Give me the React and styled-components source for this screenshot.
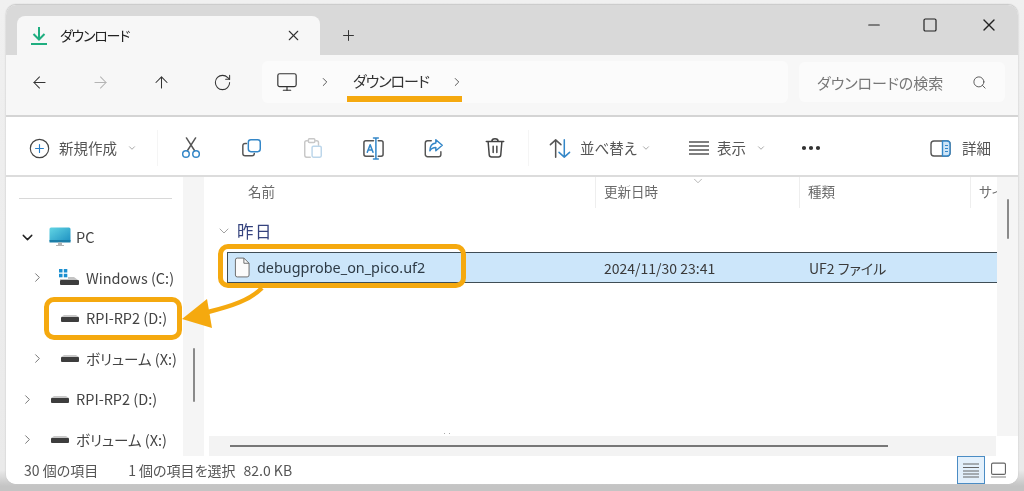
import React from "react";
import styled, { createGlobalStyle } from "styled-components";
import { ArrowLeft, ArrowRight, ArrowUp, RotateCw, Monitor, ChevronRight, ChevronDown, Search, X, Plus, Minus, Square, Ellipsis } from "lucide-react";

const Global = createGlobalStyle`
  html, body { margin: 0; padding: 0; background: #ededed; }
  body { width: 1024px; height: 491px; overflow: hidden; font-family: "Noto Sans CJK JP", "Noto Sans", sans-serif; font-feature-settings: "palt"; }
`;

const Page = styled.div`
  position: relative;
  width: 1024px;
  height: 491px;
  padding: 5px 6px 7px;
  box-sizing: border-box;
  background: linear-gradient(#f0f0f0 0, #eaeaea 470px, #c4c4c4 486px);
  filter: blur(0.4px);
`;
const Win = styled.div`
  height: 479px;
  display: flex;
  flex-direction: column;
  background: #fff;
  border-radius: 10px;
  overflow: hidden;
  box-shadow: 0 -1px 1px #c9c9c9, 0 0 2px #c4c4c4;
`;
const TitleBar = styled.div`
  height: 50px;
  flex: none;
  display: flex;
  align-items: flex-end;
  background: #d9d9d9;
  padding-left: 11px;
  box-sizing: border-box;
`;
const Tab = styled.div`
  width: 303px;
  height: 39px;
  box-sizing: border-box;
  background: #f7f7f7;
  border-radius: 8px 8px 0 0;
  display: flex;
  align-items: center;
  padding: 0 18px 0 13px;
  color: #222;
  font-size: 14px;
  gap: 12px;
`;
const TabLabel = styled.span`
  flex: 1;
  margin-top: -2px;
  letter-spacing: -1.2px;
`;
const NewTab = styled.div`
  margin: 0 0 5px 20px;
  height: 30px;
  display: flex;
  align-items: center;
  color: #333;
`;
const WinButtons = styled.div`
  margin-left: auto;
  align-self: flex-start;
  display: flex;
  align-items: center;
  height: 39px;
  gap: 39px;
  padding-right: 19px;
  color: #222;
`;
const CloseGlyph = styled(X)`
  margin-left: 2px;
`;
const NavBar = styled.div`
  height: 62px;
  flex: none;
  box-sizing: border-box;
  display: flex;
  align-items: center;
  background: #f7f7f7;
  border-bottom: 2px solid #d4d4d4;
  padding: 0 13px 6px 24px;
`;
const NavBtn = styled.div`
  width: 61px;
  flex: none;
  display: flex;
  color: ${(p) => (p.$off ? "#b4b4b4" : "#333")};
`;
const Crumbs = styled.div`
  width: 526px;
  height: 42px;
  flex: none;
  margin-left: -12px;
  box-sizing: border-box;
  background: #fbfbfb;
  border-radius: 6px;
  display: flex;
  align-items: center;
  padding-left: 14px;
  color: #333;
  font-size: 15px;
`;
const CrumbText = styled.span`
  margin: -3px 0 0 21px;
  letter-spacing: -1px;
  color: #333;
`;
const CrumbSep = styled.span`
  display: flex;
  margin-left: ${(p) => p.$ml}px;
  color: #444;
`;
const SearchBox = styled.div`
  width: 206px;
  height: 40px;
  flex: none;
  margin-left: 11px;
  box-sizing: border-box;
  background: #fbfbfb;
  border-radius: 6px;
  display: flex;
  align-items: center;
  justify-content: space-between;
  padding: 0 18px;
  color: #777;
  font-size: 15px;
`;
const ToolBar = styled.div`
  height: 60px;
  flex: none;
  box-sizing: border-box;
  display: flex;
  align-items: center;
  background: #fff;
  border-bottom: 2px solid #dcdcdc;
  padding: 4px 0 0 23px;
  color: #444;
  font-size: 14.5px;
`;
const ToolText = styled.span`
  margin-left: ${(p) => p.$ml || 0}px;
  margin-top: -1px;
  color: #555;
  white-space: nowrap;
`;
const ToolCaret = styled.span`
  display: flex;
  margin-left: ${(p) => p.$ml}px;
  color: #999;
`;
const ToolIcon = styled.span`
  display: flex;
  flex: none;
  margin-left: ${(p) => p.$ml || 0}px;
`;
const ToolSep = styled.span`
  width: 1px;
  height: 36px;
  background: #f5f5f5;
  margin-left: ${(p) => p.$ml}px;
  flex: none;
`;
const Body = styled.div`
  flex: 1;
  min-height: 0;
  display: flex;
`;
const Side = styled.div`
  width: 177px;
  flex: none;
  background: #fff;
  box-sizing: border-box;
  padding-top: 21px;
  overflow: hidden;
`;
const SideRule = styled.div`
  height: 1px;
  margin: 0 11px 0 13px;
  background: #d8d8d8;
`;
const Tree = styled.div`
  margin-top: 18px;
  display: flex;
  flex-direction: column;
`;
const TreeRow = styled.div`
  height: 40.5px;
  display: flex;
  align-items: center;
  padding-left: ${(p) => p.$indent}px;
  color: #444;
  font-size: 14.5px;
  white-space: nowrap;
`;
const TreeTwist = styled.span`
  width: ${(p) => p.$w}px;
  flex: none;
  display: flex;
  color: ${(p) => (p.$dark ? "#222" : "#777")};
`;
const TreeIcon = styled.span`
  width: ${(p) => p.$w}px;
  flex: none;
  display: flex;
`;
const TreeLabel = styled.span`
  margin-top: -1px;
`;
const SideScroll = styled.div`
  width: 21px;
  flex: none;
  background: #f5f5f5;
  display: flex;
  justify-content: center;
`;
const SideThumb = styled.div`
  width: 2px;
  height: 54px;
  margin-top: 171px;
  background: #8a8a8a;
  border-radius: 1px;
`;
const Main = styled.div`
  flex: 1;
  min-width: 0;
  display: flex;
  flex-direction: column;
  background: #fff;
`;
const Upper = styled.div`
  flex: 1;
  min-height: 0;
  display: flex;
`;
const List = styled.div`
  flex: 1;
  min-width: 0;
  overflow: hidden;
  display: flex;
  flex-direction: column;
`;
const Header = styled.div`
  height: 31px;
  flex: none;
  display: grid;
  grid-template-columns: 392px 204px 171px 1fr;
  color: #6a6a6a;
  font-size: 13.5px;
  position: relative;
`;
const HeadCell = styled.div`
  padding-left: ${(p) => p.$pl}px;
  display: flex;
  align-items: center;
  padding-bottom: 3px;
  border-right: ${(p) => (p.$rule ? "1px solid #eee" : "none")};
  white-space: nowrap;
  overflow: hidden;
`;
const SortCaret = styled.span`
  position: absolute;
  left: 487px;
  top: -3px;
  display: flex;
  color: #999;
`;
const Group = styled.div`
  height: 44px;
  flex: none;
  display: flex;
  align-items: center;
  padding: 2px 0 0 12px;
  gap: 5px;
  color: #35437e;
  font-size: 16.5px;
  letter-spacing: 1.5px;
  box-sizing: border-box;
`;
const GroupArrow = styled.span`
  display: flex;
  color: #8a8a8a;
`;
const FileRow = styled.div`
  height: 31px;
  flex: none;
  margin-left: 23px;
  box-sizing: border-box;
  background: #cce6fa;
  border-top: 1px solid #3f4d55;
  border-bottom: 1px solid #3f4d55;
  border-left: 1px solid #3f4d55;
  display: grid;
  grid-template-columns: 376px 205px 1fr;
  align-items: center;
  color: #333;
  font-size: 14px;
`;
const FileName = styled.div`
  display: flex;
  align-items: center;
  gap: 7px;
  padding-left: 6px;
  font-size: 14.4px;
  color: #2d3a45;
  font-family: "Noto Sans", sans-serif;
`;
const Cell = styled.div`
  white-space: nowrap;
  color: #3a3a3a;
`;
const VScroll = styled.div`
  width: 21px;
  flex: none;
  background: #f5f5f5;
  display: flex;
  justify-content: center;
`;
const VThumb = styled.div`
  width: 2px;
  height: 40px;
  margin-top: 22px;
  background: #8a8a8a;
  border-radius: 1px;
`;
const HScroll = styled.div`
  height: 20px;
  flex: none;
  margin: 0 22px 0 5px;
  background: #f3f3f3;
  display: flex;
  align-items: center;
  padding-left: 21px;
  position: relative;
`;
const HThumb = styled.div`
  width: 658px;
  height: 2px;
  background: #777;
`;
const HDots = styled.span`
  position: absolute;
  left: 235px;
  top: -3px;
  width: 4px;
  height: 1px;
  border-left: 1px solid #aaa;
  border-right: 1px solid #aaa;
`;
const Status = styled.div`
  height: 28px;
  flex: none;
  display: flex;
  align-items: center;
  background: #fff;
  padding: 0 12px 0 18px;
  color: #555;
  font-size: 14px;
  box-sizing: border-box;
`;
const StatusText = styled.span`
  margin-left: ${(p) => p.$ml || 0}px;
  white-space: nowrap;
`;
const ViewButtons = styled.div`
  margin-left: auto;
  display: flex;
  align-items: center;
  gap: 6px;
`;
const ViewBtn = styled.span`
  width: ${(p) => (p.$active ? "28px" : "15px")};
  height: 28px;
  box-sizing: border-box;
  display: flex;
  align-items: center;
  justify-content: center;
  background: ${(p) => (p.$active ? "#e3f0fb" : "transparent")};
  border: ${(p) => (p.$active ? "1.5px solid #4a8cc4" : "none")};
`;
const Mark = styled.div`
  position: absolute;
  box-sizing: border-box;
  left: ${(p) => p.$x}px;
  top: ${(p) => p.$y}px;
  width: ${(p) => p.$w}px;
  height: ${(p) => p.$h}px;
  border: 5.5px solid #f5a90f;
  border-radius: 10px;
`;
const Underline = styled.div`
  position: absolute;
  left: 347px;
  top: 96px;
  width: 115px;
  height: 6px;
  background: #f5a90f;
`;
const ArrowOverlay = styled.svg`
  position: absolute;
  left: 170px;
  top: 280px;
  overflow: visible;
`;

const Download = () => (
  <svg width="18" height="20" viewBox="0 0 18 20" fill="none" stroke="#1fae80" strokeWidth="2">
    <path d="M9 1v12M3.500 8 9 13.500 14.500 8M1 18h16" />
  </svg>
);
const Plain = ({ size, children, ...rest }) => (
  <svg width={size} height={size} viewBox="0 0 24 24" fill="none" strokeWidth="1.600" stroke="#444" strokeLinecap="round" strokeLinejoin="round" {...rest}>
    {children}
  </svg>
);
const NewIcon = () => (
  <Plain size={21} strokeWidth="1.300">
    <circle cx="12" cy="12" r="10.500" />
    <path d="M12 7.500v9M7.500 12h9" stroke="#2a7fc9" />
  </Plain>
);
const ScissorsIcon = () => (
  <Plain size={22}>
    <path d="M8 15 17 1M16 15 7 1" stroke="#555" />
    <circle cx="6.500" cy="18.500" r="3.600" stroke="#3487c8" />
    <circle cx="17.500" cy="18.500" r="3.600" stroke="#3487c8" />
  </Plain>
);
const CopyIcon = () => (
  <Plain size={22}>
    <path d="M6 7H4.500A2.500 2.500 0 0 0 2 9.500V18a2.500 2.500 0 0 0 2.500 2.500H12a2.500 2.500 0 0 0 2.500-2.500" stroke="#555" />
    <rect x="8" y="3" width="13" height="13" rx="2.800" stroke="#3487c8" />
  </Plain>
);
const PasteIcon = () => (
  <Plain size={22} stroke="#c8c8c8">
    <path d="M6 4H5a2 2 0 0 0-2 2v14a2 2 0 0 0 2 2h4M15 4h1a2 2 0 0 1 2 2v3" />
    <rect x="7" y="2" width="7" height="4" rx="1" />
    <rect x="11" y="10" width="10" height="12" rx="1.500" stroke="#bcd6ea" />
  </Plain>
);
const RenameIcon = () => (
  <Plain size={23}>
    <path d="M12 4H4a2 2 0 0 0-2 2v12a2 2 0 0 0 2 2h8M17 4h3a2 2 0 0 1 2 2v12a2 2 0 0 1-2 2h-3" stroke="#555" />
    <path d="M14.500 1v22M12 1h5M12 23h5" stroke="#3487c8" />
    <path d="M5.500 16 8.500 8l3 8M6.500 13.500h4" stroke="#3487c8" />
  </Plain>
);
const ShareIcon = () => (
  <Plain size={22}>
    <path d="M9 4H5a2.500 2.500 0 0 0-2.500 2.500v12.500A2.500 2.500 0 0 0 5 21.500h12a2.500 2.500 0 0 0 2.500-2.500v-3" stroke="#555" />
    <path d="M14 3l7 6-7 6v-3.500c-3 0-5 1-6.500 3.500 0-5 2.500-8 6.500-8.500z" stroke="#3487c8" />
  </Plain>
);
const TrashIcon = () => (
  <Plain size={22}>
    <path d="M2.500 5h19M8.500 5c0-4 7-4 7 0M4.500 5l1.200 14.500a2.500 2.500 0 0 0 2.500 2.300h7.600a2.500 2.500 0 0 0 2.500-2.300L19.500 5M10 10v7M14 10v7" />
  </Plain>
);
const SortIcon = () => (
  <Plain size={23}>
    <path d="M8 21V3M2.500 8 8 3l5.500 5" stroke="#555" />
    <path d="M17 3v18M11.500 16l5.500 5 5.500-5" stroke="#3487c8" />
  </Plain>
);
const ViewIcon = () => (
  <svg width="20" height="14" viewBox="0 0 20 14" fill="none" stroke="#555" strokeWidth="1.300">
    <path d="M0 1h20M0 5h20M0 9h20M0 13h20" />
  </svg>
);
const DetailsIcon = () => (
  <svg width="21" height="17" viewBox="0 0 21 17" fill="none" strokeWidth="1.400">
    <rect x="1" y="1" width="19" height="15" rx="3" stroke="#555" />
    <path d="M12.500 1H17a3 3 0 0 1 3 3v9a3 3 0 0 1-3 3h-4.500z" fill="#cfe5f7" stroke="#3487c8" />
    <path d="M15 5.500h3M15 8.500h3M15 11.500h3" stroke="#3487c8" strokeWidth="1" />
  </svg>
);
const PcIcon = () => (
  <svg width="22" height="20" viewBox="0 0 22 20">
    <defs>
      <linearGradient id="pcg" x1="0" y1="0" x2="1" y2="1">
        <stop offset="0" stopColor="#62d5e4" />
        <stop offset="1" stopColor="#1c8fc1" />
      </linearGradient>
    </defs>
    <rect x="0.500" y="0.500" width="21" height="14.500" rx="1.500" fill="url(#pcg)" />
    <rect x="0.500" y="13" width="21" height="2.500" fill="#1b7ea8" />
    <path d="M9 15.500h4v2.500H9zM7 18h8v1H7z" fill="#b4b4b4" />
  </svg>
);
const DriveIcon = () => (
  <svg width="18" height="7" viewBox="0 0 18 7">
    <path d="M3 0h12l3 2v2H0V2z" fill="#c8c8c8" />
    <rect x="0" y="2" width="18" height="5" rx="1" fill="#3d3d3d" />
  </svg>
);
const WinDrive = () => (
  <svg width="20" height="17" viewBox="0 0 20 17">
    <g fill="#1c8fd0">
      <rect x="0" y="0" width="3.500" height="3.500" />
      <rect x="4.800" y="0" width="3.500" height="3.500" />
      <rect x="0" y="4.800" width="3.500" height="3.500" />
      <rect x="4.800" y="4.800" width="3.500" height="3.500" />
    </g>
    <path d="M9 8h6l4 3H1v-1h8z" fill="#c4c4c4" />
    <rect x="1" y="11" width="19" height="5" rx="1" fill="#3d3d3d" />
  </svg>
);
const FileIcon = () => (
  <svg width="16" height="21" viewBox="0 0 17 21" fill="#fbfbfb" stroke="#666" strokeWidth="1">
    <path d="M1.500 2.500a2 2 0 0 1 2-2h7l5.500 5.500v12.500a2 2 0 0 1-2 2h-10.500a2 2 0 0 1-2-2z" />
    <path d="M10.500 .5v5.500h5.500" fill="none" />
  </svg>
);
const ListViewIcon = () => (
  <svg width="16" height="15" viewBox="0 0 16 15" fill="none" stroke="#666" strokeWidth="1.200">
    <path d="M0 1h16M0 4.500h16M0 8h16M0 11h16M0 14h16" />
  </svg>
);
const TileViewIcon = () => (
  <svg width="15" height="17" viewBox="0 0 16 17" fill="none" stroke="#666" strokeWidth="1.200">
    <rect x="0.600" y="0.600" width="14.800" height="12" rx="1.500" />
    <path d="M0 15.500h16" stroke="#aaa" strokeWidth="1.500" />
  </svg>
);

const tree = [
  { indent: 13, twist: 30, iconW: 27, label: "PC", open: true, icon: <PcIcon /> },
  { indent: 24, twist: 29, iconW: 27, label: "Windows (C:)", icon: <WinDrive /> },
  { indent: 55, iconW: 25, label: "RPI-RP2 (D:)", icon: <DriveIcon />, bare: true },
  { indent: 24, twist: 31, iconW: 25, label: "ボリューム (X:)", icon: <DriveIcon /> },
  { indent: 14, twist: 31, iconW: 25, label: "RPI-RP2 (D:)", icon: <DriveIcon /> },
  { indent: 14, twist: 31, iconW: 25, label: "ボリューム (X:)", icon: <DriveIcon /> },
];

export default function App() {
  return (
    <>
      <Global />
      <Page>
        <Win>
          <TitleBar>
            <Tab>
              <Download />
              <TabLabel>ダウンロード</TabLabel>
              <X size={17} strokeWidth={1.500} color="#333" />
            </Tab>
            <NewTab><Plus size={17} strokeWidth={1.400} /></NewTab>
            <WinButtons>
              <Minus size={18} strokeWidth={1.500} />
              <Square size={16} strokeWidth={1.800} />
              <CloseGlyph size={20} strokeWidth={1.600} />
            </WinButtons>
          </TitleBar>
          <NavBar>
            <NavBtn><ArrowLeft size={19} strokeWidth={1.300} /></NavBtn>
            <NavBtn $off><ArrowRight size={19} strokeWidth={1.300} /></NavBtn>
            <NavBtn><ArrowUp size={19} strokeWidth={1.300} /></NavBtn>
            <NavBtn><RotateCw size={19} strokeWidth={1.300} /></NavBtn>
            <Crumbs>
              <Monitor size={22} strokeWidth={1.300} />
              <CrumbSep $ml={20}><ChevronRight size={14} strokeWidth={1.500} /></CrumbSep>
              <CrumbText>ダウンロード</CrumbText>
              <CrumbSep $ml={21}><ChevronRight size={14} strokeWidth={1.500} /></CrumbSep>
            </Crumbs>
            <SearchBox>
              <span>ダウンロードの検索</span>
              <Search size={15} strokeWidth={1.500} color="#555" />
            </SearchBox>
          </NavBar>
          <ToolBar>
            <ToolIcon><NewIcon /></ToolIcon>
            <ToolText $ml={9}>新規作成</ToolText>
            <ToolCaret $ml={10}><ChevronDown size={10} /></ToolCaret>
            <ToolSep $ml={20} />
            <ToolIcon $ml={22}><ScissorsIcon /></ToolIcon>
            <ToolIcon $ml={39}><CopyIcon /></ToolIcon>
            <ToolIcon $ml={39}><PasteIcon /></ToolIcon>
            <ToolIcon $ml={38}><RenameIcon /></ToolIcon>
            <ToolIcon $ml={38}><ShareIcon /></ToolIcon>
            <ToolIcon $ml={39}><TrashIcon /></ToolIcon>
            <ToolSep $ml={22} />
            <ToolIcon $ml={19}><SortIcon /></ToolIcon>
            <ToolText $ml={9}>並べ替え</ToolText>
            <ToolCaret $ml={4}><ChevronDown size={10} /></ToolCaret>
            <ToolIcon $ml={38}><ViewIcon /></ToolIcon>
            <ToolText $ml={8}>表示</ToolText>
            <ToolCaret $ml={10}><ChevronDown size={10} /></ToolCaret>
            <ToolIcon $ml={33}><Ellipsis size={24} strokeWidth={2.200} color="#333" /></ToolIcon>
            <ToolIcon $ml={107}><DetailsIcon /></ToolIcon>
            <ToolText $ml={11}>詳細</ToolText>
          </ToolBar>
          <Body>
            <Side>
              <SideRule />
              <Tree>
                {tree.map((r, i) => (
                  <TreeRow key={i} $indent={r.indent}>
                    {!r.bare && (
                      <TreeTwist $w={r.twist} $dark={r.open}>
                        {r.open ? <ChevronDown size={17} strokeWidth={2} /> : <ChevronRight size={15} strokeWidth={1.600} />}
                      </TreeTwist>
                    )}
                    <TreeIcon $w={r.iconW}>{r.icon}</TreeIcon>
                    <TreeLabel>{r.label}</TreeLabel>
                  </TreeRow>
                ))}
              </Tree>
            </Side>
            <SideScroll><SideThumb /></SideScroll>
            <Main>
              <Upper>
                <List>
                  <Header>
                    <HeadCell $pl={44} $rule>名前</HeadCell>
                    <HeadCell $pl={8} $rule>更新日時</HeadCell>
                    <HeadCell $pl={8} $rule>種類</HeadCell>
                    <HeadCell $pl={8}>サイ</HeadCell>
                    <SortCaret><ChevronDown size={14} strokeWidth={1.200} /></SortCaret>
                  </Header>
                  <Group>
                    <GroupArrow><ChevronDown size={16} strokeWidth={1.200} /></GroupArrow>
                    昨日
                  </Group>
                  <FileRow>
                    <FileName><FileIcon />debugprobe_on_pico.uf2</FileName>
                    <Cell>2024/11/30 23:41</Cell>
                    <Cell>UF2 ファイル</Cell>
                  </FileRow>
                </List>
                <VScroll><VThumb /></VScroll>
              </Upper>
              <HScroll>
                <HThumb />
                <HDots />
              </HScroll>
            </Main>
          </Body>
          <Status>
            <StatusText>30 個の項目</StatusText>
            <StatusText $ml={30}>1 個の項目を選択</StatusText>
            <StatusText $ml={8}>82.0 KB</StatusText>
            <ViewButtons>
              <ViewBtn $active><ListViewIcon /></ViewBtn>
              <ViewBtn><TileViewIcon /></ViewBtn>
            </ViewButtons>
          </Status>
        </Win>
        <Underline />
        <Mark $x={218} $y={244} $w={248} $h={44} />
        <Mark $x={44} $y={297} $w={138} $h={43} />
        <ArrowOverlay width="100" height="60" viewBox="0 0 100 60">
          <path d="M92 8C80 20 62 26 38 32" fill="none" stroke="#f5a90f" strokeWidth="4.500" />
          <path d="M12 39 37 19 42 48Z" fill="#f5a90f" />
        </ArrowOverlay>
      </Page>
    </>
  );
}
